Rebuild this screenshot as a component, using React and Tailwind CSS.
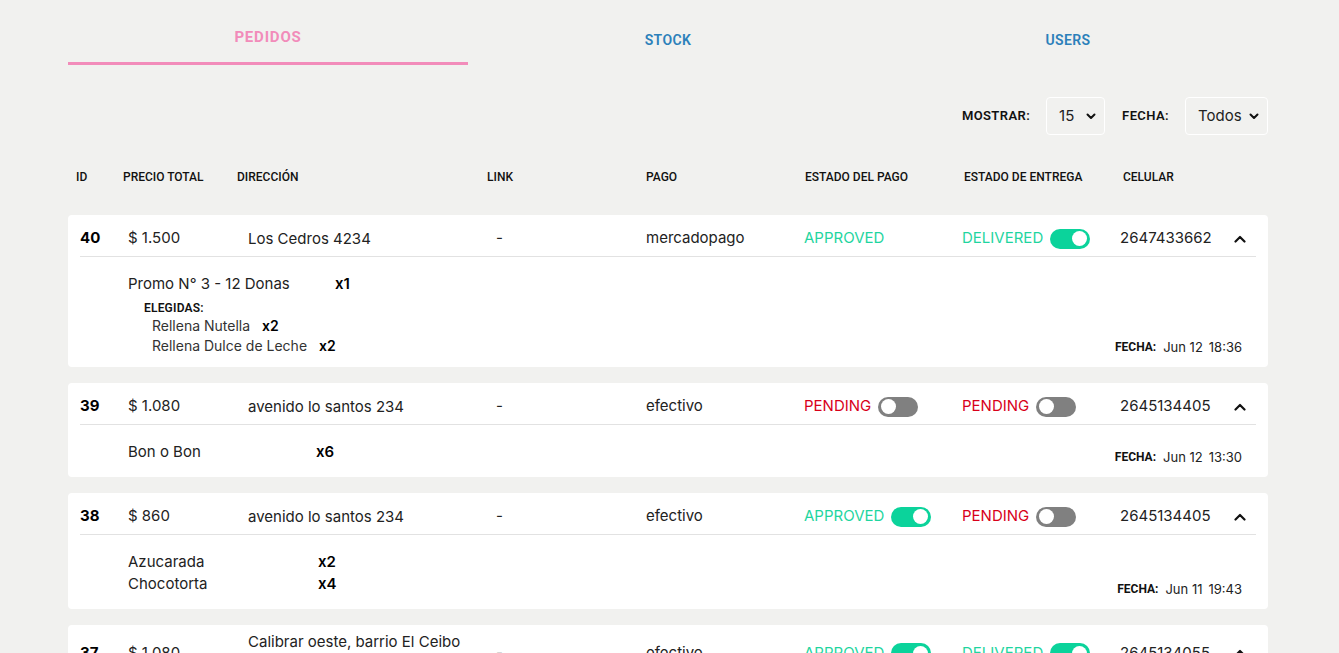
import { useState } from "react";

const orders = [
  {
    id: 40,
    total: "$ 1.500",
    address: ["Los Cedros 4234"],
    link: "-",
    payment: "mercadopago",
    payStatus: "APPROVED",
    payToggle: false,
    delivery: "DELIVERED",
    phone: "2647433662",
    nameWidth: "w-[207px]",
    items: [
      {
        name: "Promo N° 3 - 12 Donas",
        qty: "x1",
        chosen: [
          { name: "Rellena Nutella", qty: "x2" },
          { name: "Rellena Dulce de Leche", qty: "x2" },
        ],
      },
    ],
    date: "Jun 12",
    time: "18:36",
  },
  {
    id: 39,
    total: "$ 1.080",
    address: ["avenido lo santos 234"],
    link: "-",
    payment: "efectivo",
    payStatus: "PENDING",
    payToggle: true,
    delivery: "PENDING",
    phone: "2645134405",
    nameWidth: "w-[188px]",
    items: [{ name: "Bon o Bon", qty: "x6" }],
    date: "Jun 12",
    time: "13:30",
  },
  {
    id: 38,
    total: "$ 860",
    address: ["avenido lo santos 234"],
    link: "-",
    payment: "efectivo",
    payStatus: "APPROVED",
    payToggle: true,
    delivery: "PENDING",
    phone: "2645134405",
    nameWidth: "w-[190px]",
    items: [
      { name: "Azucarada", qty: "x2" },
      { name: "Chocotorta", qty: "x4" },
    ],
    date: "Jun 11",
    time: "19:43",
  },
  {
    id: 37,
    total: "$ 1.080",
    address: ["Calibrar oeste, barrio El Ceibo", "casa 12"],
    link: "-",
    payment: "efectivo",
    payStatus: "APPROVED",
    payToggle: true,
    delivery: "DELIVERED",
    phone: "2645134055",
    nameWidth: "w-[190px]",
    items: [{ name: "Bon o Bon", qty: "x2" }],
    date: "Jun 11",
    time: "12:10",
  },
];

function Toggle({ on }) {
  return (
    <span
      className={`flex h-[20px] w-[40px] items-center rounded-full px-[3px] ${
        on ? "justify-end bg-[#0bd39b]" : "justify-start bg-[#808080]"
      }`}
    >
      <span className="h-[15px] w-[15px] rounded-full bg-white" />
    </span>
  );
}

function Status({ value, toggle }) {
  const ok = value === "APPROVED" || value === "DELIVERED";
  return (
    <div className="flex items-center gap-[7px]">
      <span className={ok ? "text-[#1fd5a0]" : "text-[#d8001a]"}>{value}</span>
      {toggle && <Toggle on={ok} />}
    </div>
  );
}

function Chevron() {
  return (
    <svg width="12" height="8" viewBox="0 0 12 8" fill="none">
      <path d="M1.5 6.5 6 2l4.5 4.5" stroke="#111" strokeWidth="2.2" strokeLinecap="round" strokeLinejoin="round" />
    </svg>
  );
}

function Select({ value, width }) {
  return (
    <label className={`flex h-[38px] ${width} items-center justify-between rounded-[4px] border border-white pl-3 pr-[8px] text-[15px] text-[#222]`}>
      <select className="appearance-none bg-transparent outline-none" defaultValue={value}>
        <option>{value}</option>
      </select>
      <svg width="10" height="7" viewBox="0 0 10 7" fill="none">
        <path d="M1.5 1.5 5 5l3.5-3.5" stroke="#111" strokeWidth="2" strokeLinecap="round" strokeLinejoin="round" />
      </svg>
    </label>
  );
}

function OrderCard({ order }) {
  return (
    <div className="rounded-[4px] bg-white px-3">
      <div className="flex min-h-[42px] items-center border-b border-[#e2e2e2] pt-[6px] text-[15px] text-[#222]">
        <div className="w-[48px] font-bold text-black">{order.id}</div>
        <div className="w-[120px]">{order.total}</div>
        <div className="w-[248px] leading-[22px]">
          {order.address.map((line) => (
            <div key={line}>{line}</div>
          ))}
        </div>
        <div className="w-[150px]">{order.link}</div>
        <div className="w-[158px]">{order.payment}</div>
        <div className="w-[158px]">
          <Status value={order.payStatus} toggle={order.payToggle} />
        </div>
        <div className="w-[158px]">
          <Status value={order.delivery} toggle />
        </div>
        <div className="w-[112px]">{order.phone}</div>
        <div className="flex flex-1 justify-start pl-[2px]">
          <Chevron />
        </div>
      </div>
      <div className="flex items-end justify-between pb-[12px] pl-[48px] pr-[14px] pt-[16px]">
        <div className="pb-[2px]">
          {order.items.map((item) => (
            <div key={item.name}>
              <div className="flex text-[15px] leading-[22px] text-[#222]">
                <span className={order.nameWidth}>{item.name}</span>
                <span className="font-semibold text-black">{item.qty}</span>
              </div>
              {item.chosen && (
                <div className="-mb-[3px] pl-4 pt-[5px]">
                  <div className="font-['Roboto',sans-serif] text-[12px] font-semibold leading-[16px] tracking-[0.2px] text-[#111]">ELEGIDAS:</div>
                  {item.chosen.map((c) => (
                    <div key={c.name} className="flex gap-3 pl-2 text-[14px] leading-[20px] text-[#333]">
                      <span>{c.name}</span>
                      <span className="font-semibold text-black">{c.qty}</span>
                    </div>
                  ))}
                </div>
              )}
            </div>
          ))}
        </div>
        <div className="flex items-center text-[13px] leading-[16px] text-[#222]">
          <span className="mr-[7px] font-['Roboto',sans-serif] text-[12px] font-bold text-[#111]">FECHA:</span>
          <span className="mr-[6px]">{order.date}</span>
          <span>{order.time}</span>
        </div>
      </div>
    </div>
  );
}

export default function App() {
  const [tab, setTab] = useState("PEDIDOS");
  const tabs = ["PEDIDOS", "STOCK", "USERS"];
  const headers = [
    ["ID", "w-[47px]"],
    ["PRECIO TOTAL", "w-[114px]"],
    ["DIRECCIÓN", "w-[250px]"],
    ["LINK", "w-[159px]"],
    ["PAGO", "w-[159px]"],
    ["ESTADO DEL PAGO", "w-[159px]"],
    ["ESTADO DE ENTREGA", "w-[159px]"],
    ["CELULAR", "w-[100px]"],
  ];

  return (
    <div className="min-h-screen bg-[#f1f1ef] font-['Inter',sans-serif]">
      <div className="mx-[68px] w-[1200px]">
        <nav className="flex pt-[18px]">
          {tabs.map((t) => (
            <button
              key={t}
              onClick={() => setTab(t)}
              className={`h-[47px] w-[400px] border-b-[3px] text-center font-['Roboto',sans-serif] tracking-[0.4px] ${
                tab === t
                  ? "border-[#f28cba] pb-[6px] text-[15px] font-bold tracking-[0.8px] text-[#f28cba]"
                  : "border-transparent pb-0 text-[14px] font-semibold text-[#2b80ba]"
              }`}
            >
              {t}
            </button>
          ))}
        </nav>

        <div className="mt-[32px] flex items-center justify-end gap-4">
          <span className="font-['Roboto',sans-serif] text-[13px] font-semibold tracking-[0.4px] text-[#111]">MOSTRAR:</span>
          <Select value="15" width="w-[59px]" />
          <span className="ml-[1px] font-['Roboto',sans-serif] text-[13px] font-semibold tracking-[0.4px] text-[#111]">FECHA:</span>
          <Select value="Todos" width="w-[83px]" />
        </div>

        <div className="mt-[33px] flex pl-2 font-['Roboto',sans-serif] text-[12px] font-medium text-[#111]">
          {headers.map(([h, w]) => (
            <div key={h} className={w}>
              {h}
            </div>
          ))}
        </div>

        <div className="mt-[29px] flex flex-col gap-4 pb-6">
          {orders.map((o) => (
            <OrderCard key={o.id} order={o} />
          ))}
        </div>
      </div>
    </div>
  );
}
